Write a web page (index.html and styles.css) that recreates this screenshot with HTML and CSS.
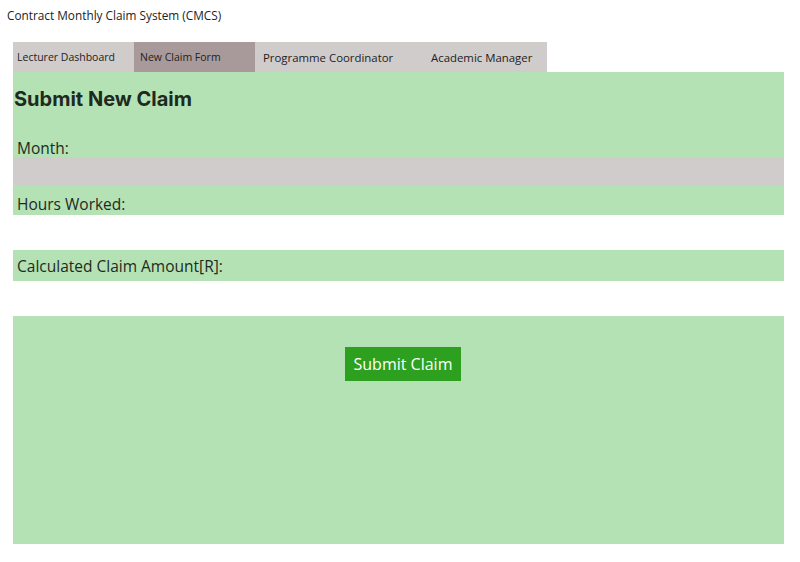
FILE: index.html
```html
<!DOCTYPE html>
<html>
<head>
<meta charset="utf-8">
<link rel="stylesheet" href="styles.css">
</head>
<body>
<header class="site-title">Contract Monthly Claim System (CMCS)</header>
<nav class="tabs">
  <a class="tab tab-small">Lecturer Dashboard</a>
  <a class="tab tab-small tab-active">New Claim Form</a>
  <a class="tab tab-wide">Programme Coordinator</a>
  <a class="tab tab-last">Academic Manager</a>
</nav>
<section class="panel panel-top">
  <h2 class="heading">Submit New Claim</h2>
  <label class="label label-month">Month:</label>
  <div class="input-bar"></div>
  <label class="label label-hours">Hours Worked:</label>
</section>
<div class="spacer"></div>
<section class="panel panel-amount">
  <label class="label">Calculated Claim Amount[R]:</label>
</section>
<div class="spacer"></div>
<section class="panel panel-submit">
  <button class="submit-btn">Submit Claim</button>
</section>
</body>
</html>
```
FILE: styles.css
```css
html, body {
  margin: 0;
  padding: 0;
  background: #ffffff;
}
body {
  font-family: "Open Sans", "DejaVu Sans", sans-serif;
  color: #1f2a1f;
  padding: 0 16px 0 13px;
}
.site-title {
  font-size: 11.8px;
  line-height: 16px;
  padding: 7px 0 19px 0;
  margin-left: -6px;
  color: #222;
}
.tabs {
  display: flex;
  width: 534px;
  height: 30px;
  background: #d0cccc;
}
.tab {
  display: flex;
  align-items: center;
  padding-left: 4px;
  box-sizing: border-box;
  color: #222;
  font-size: 11.4px;
}
.tab-small {
  width: 121px;
  font-size: 10.5px;
}
.tab-active {
  background: #a89a9a;
  padding-left: 6px;
}
.tab-wide {
  width: 160px;
  padding-left: 8px;
}
.tab-last {
  width: 132px;
  padding-left: 16px;
}
.panel {
  background: #b4e2b4;
}
.panel-top {
  height: 143px;
  display: flex;
  flex-direction: column;
}
.heading {
  margin: 0;
  padding: 15px 0 0 1px;
  font-family: Inter, "Liberation Sans", sans-serif;
  font-size: 20px;
  line-height: 24px;
  font-weight: 700;
  color: #1e2a1e;
}
.label {
  display: block;
  font-size: 15.5px;
  line-height: 20px;
  padding-left: 4px;
  color: #1f2a1f;
}
.label-month {
  margin-top: 27px;
  height: 19px;
}
.input-bar {
  height: 28px;
  background: #d0cccc;
}
.label-hours {
  padding-top: 9px;
}
.spacer {
  height: 35px;
}
.panel-amount {
  height: 31px;
  display: flex;
  align-items: center;
}
.panel-submit {
  height: 228px;
  display: flex;
  justify-content: center;
  align-items: flex-start;
  padding-top: 31px;
  box-sizing: border-box;
}
.submit-btn {
  font-family: "Open Sans", "DejaVu Sans", sans-serif;
  background: #2ea01f;
  color: #ffffff;
  border: none;
  font-size: 16px;
  width: 116px;
  height: 34px;
  padding: 0;
  margin-left: 9px;
}
```
